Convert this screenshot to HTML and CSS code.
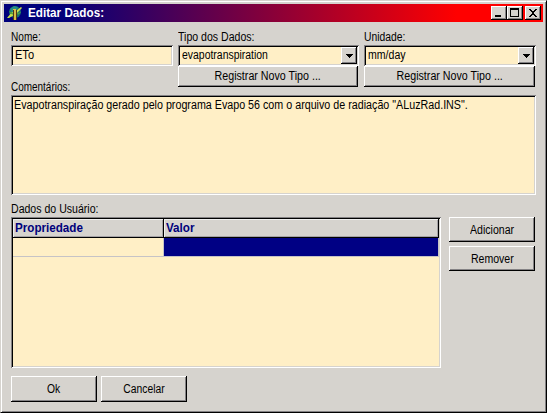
FILE: index.html
```html
<!DOCTYPE html>
<html lang="pt">
<head>
<meta charset="utf-8">
<title>Editar Dados</title>
<link rel="stylesheet" href="styles.css">
</head>
<body>
<div class="window">
  <header class="titlebar">
    <svg class="app-icon" width="16" height="16" viewBox="0 0 16 16">
      <circle cx="8" cy="7" r="6" fill="#176f70"/>
      <path d="M3 4l4-3 4 1-2 4-4 2z" fill="#258c83"/>
      <path d="M0 13l5-6 2 1v2l-5 3zM9 6l5-4 1 1-5 5z" fill="#c9e04a"/>
      <path d="M2 6l4 2 1 2-3-1zM10 8l4-1-3 3z" fill="#56a63b"/>
      <path d="M6 4h3v11H6z" fill="#d5bd48"/>
      <path d="M9 5h1v10H9zM6 5h1v10H6z" fill="#503916"/>
    </svg>
    <h1 class="title"><span class="w90">Editar Dados:</span></h1>
    <div class="controls">
      <button class="ctl" aria-label="Minimizar"><svg width="16" height="14"><path d="M4 9h6v2H4z"/></svg></button>
      <button class="ctl" aria-label="Maximizar"><svg width="16" height="14"><path fill-rule="evenodd" d="M3 2h9v9H3zM4 4v6h7V4z"/></svg></button>
      <button class="ctl close" aria-label="Fechar"><svg width="16" height="14"><path d="M4 3h2v1h1v1h2V4h1V3h2v1h-1v1h-1v1H9v2h1v1h1v1h1v1h-2v-1H9V9H7v1H6v1H4v-1h1V9h1V8h1V6H6V5H5V4H4z"/></svg></button>
    </div>
  </header>
  <main class="body">
    <div class="fields">
      <div class="field">
        <label><span class="w84">Nome:</span></label>
        <div class="sunken entry"><span class="w92">ETo</span></div>
      </div>
      <div class="field">
        <label><span class="w88">Tipo dos Dados:</span></label>
        <div class="sunken entry"><span class="w87">evapotranspiration</span><i class="drop"><svg width="7" height="4"><path d="M0 0h7v1H6v1H5v1H4v1H3V3H2V2H1V1H0z"/></svg></i></div>
        <button class="btn register"><span class="w89">Registrar Novo Tipo ...</span></button>
      </div>
      <div class="field">
        <label><span class="w86">Unidade:</span></label>
        <div class="sunken entry"><span class="w88">mm/day</span><i class="drop"><svg width="7" height="4"><path d="M0 0h7v1H6v1H5v1H4v1H3V3H2V2H1V1H0z"/></svg></i></div>
        <button class="btn register"><span class="w89">Registrar Novo Tipo ...</span></button>
      </div>
    </div>
    <label class="comments-label"><span class="w83">Comentários:</span></label>
    <div class="sunken comments"><span class="w893">Evapotranspiração gerado pelo programa Evapo 56 com o arquivo de radiação "ALuzRad.INS".</span></div>
    <label class="data-label"><span class="w88">Dados do Usuário:</span></label>
    <div class="data">
      <div class="sunken grid">
        <div class="head"><span class="w97">Propriedade</span></div>
        <div class="head"><span class="w97">Valor</span></div>
        <div class="cell"></div>
        <div class="cell selected"></div>
      </div>
      <div class="side">
        <button class="btn action"><span class="w88">Adicionar</span></button>
        <button class="btn action"><span class="w88">Remover</span></button>
      </div>
    </div>
    <footer class="footer">
      <button class="btn"><span class="w86">Ok</span></button>
      <button class="btn"><span class="w86">Cancelar</span></button>
    </footer>
  </main>
</div>
</body>
</html>
```
FILE: styles.css
```css
* { box-sizing: border-box; }
body { margin: 0; font: 12px/14px "Liberation Sans", Arial, sans-serif; color: #000; }
button { font: inherit; color: inherit; padding: 0; margin: 0; border-radius: 0; }
label { display: block; white-space: nowrap; }

/* Condensed text widths */
span { display: inline-block; white-space: nowrap; transform-origin: 0 50%; }
.btn span { transform-origin: 50% 50%; }
.w83 { transform: scaleX(.83); }
.w84 { transform: scaleX(.84); }
.w86 { transform: scaleX(.86); }
.w87 { transform: scaleX(.87); }
.w88 { transform: scaleX(.88); }
.w89 { transform: scaleX(.89); }
.w893 { transform: scaleX(.893); }
.w90 { transform: scaleX(.9); }
.w92 { transform: scaleX(.92); }
.w97 { transform: scaleX(.97); }

.window {
  width: 547px; height: 413px; padding: 2px; background: #d6d3ce;
  border: 1px solid; border-color: #d6d3ce #000 #000 #d6d3ce;
  box-shadow: inset 1px 1px #fff, inset -1px -1px #848284;
}
.titlebar {
  display: flex; align-items: center; height: 18px; margin: 1px 0 0 1px; width: 539px;
  padding: 0 2px; background: linear-gradient(90deg, #00007b 0%, #00007b 10%, #f00 84%, #f00 100%);
}
.app-icon { display: block; margin-left: 1px; }
.title { margin: 0 auto 0 5px; font-size: 13px; line-height: 18px; color: #fff; }
.controls { display: flex; }
.ctl {
  width: 16px; height: 14px; background: #d6d3ce; border: 0;
  box-shadow: inset -1px -1px #000, inset 1px 1px #fff, inset -2px -2px #848284;
}
.ctl svg { display: block; }
.close { margin-left: 2px; }
.body { padding: 8px 0 0 8px; }
.fields {
  display: grid; grid-template-columns: 162px 181px 172px; column-gap: 5px;
  height: 51px; align-items: start;
}
.field label { height: 15px; }
.sunken {
  background: #ffefc6; padding: 2px;
  box-shadow: inset 1px 1px #848284, inset -1px -1px #fff, inset 2px 2px #000, inset -2px -2px #d6d3ce;
}
.entry { display: flex; align-items: center; justify-content: space-between; height: 21px; padding-left: 4px; }
.entry span { margin-top: -1px; }
.drop {
  display: flex; align-items: center; justify-content: center; width: 16px; height: 17px;
  background: #d6d3ce; box-shadow: inset -1px -1px #000, inset 1px 1px #fff, inset -2px -2px #848284;
}
.btn {
  display: flex; align-items: center; justify-content: center; background: #d6d3ce; border: 0;
  box-shadow: inset -1px -1px #000, inset 1px 1px #fff, inset -2px -2px #848284;
}
.register { height: 21px; width: calc(100% - 1px); padding-bottom: 1px; }
.comments-label { height: 14px; line-height: 12px; }
.comments { width: 525px; height: 100px; padding: 3px; }
.data-label { height: 22px; padding-top: 7px; }
.data { display: flex; gap: 8px; }
.grid {
  display: grid; width: 430px; height: 151px; align-content: start;
  grid-template-columns: 151px 275px; grid-template-rows: 19px 19px;
}
.head {
  background: #d6d3ce; border-right: 1px solid #000; border-bottom: 1px solid #000;
  box-shadow: inset 1px 1px #efefef, inset -1px -1px #a5a2a5;
  color: #00007b; font-weight: bold; padding: 2px 0 0 2px; line-height: 15px;
}
.cell { border-right: 1px solid #c6c3c6; border-bottom: 1px solid #c6c3c6; }
.selected { background: #000084; }
.side { display: flex; flex-direction: column; gap: 4px; }
.action { width: 86px; height: 25px; }
.footer { display: flex; gap: 4px; padding-top: 8px; }
.footer .btn { width: 86px; height: 26px; }
```
